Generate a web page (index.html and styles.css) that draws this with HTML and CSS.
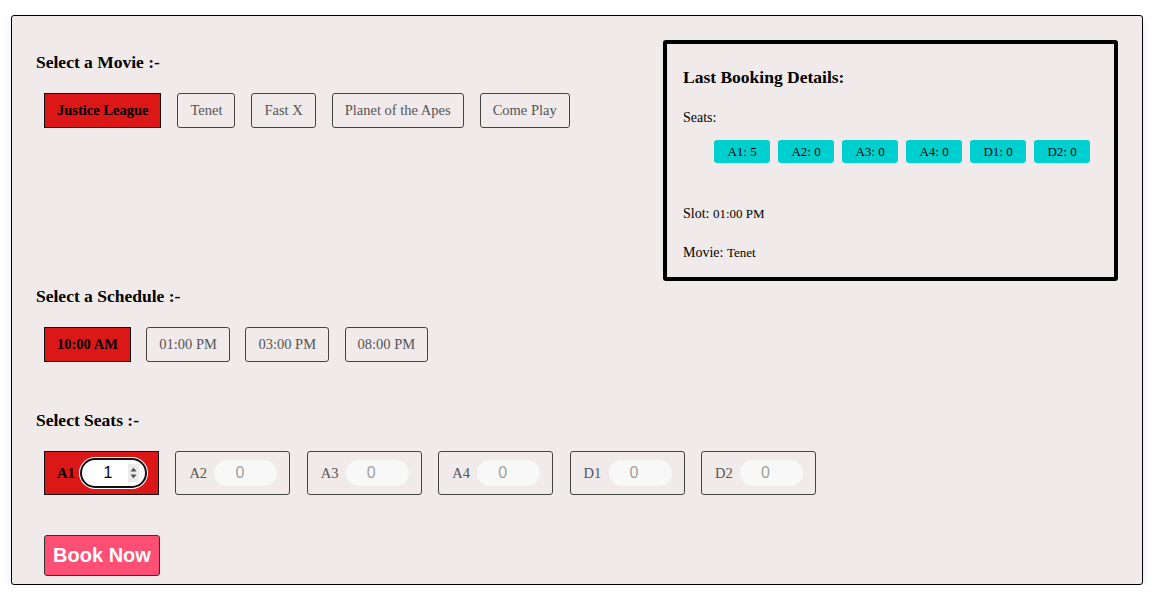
FILE: index.html
```html
<!DOCTYPE html>
<html>
<head>
<meta charset="utf-8">
<link rel="stylesheet" href="styles.css">
</head>
<body>
<div class="app">
  <div class="top">
    <div class="movie-sec">
      <div class="title">Select a Movie :-</div>
      <div class="opts">
        <button class="opt active">Justice League</button>
        <button class="opt">Tenet</button>
        <button class="opt">Fast X</button>
        <button class="opt">Planet of the Apes</button>
        <button class="opt">Come Play</button>
      </div>
    </div>
    <div class="last">
      <div class="last-title">Last Booking Details:</div>
      <div class="lbl">Seats:</div>
      <div class="chips">
        <span class="chip">A1: 5</span>
        <span class="chip">A2: 0</span>
        <span class="chip">A3: 0</span>
        <span class="chip">A4: 0</span>
        <span class="chip">D1: 0</span>
        <span class="chip">D2: 0</span>
      </div>
      <div class="lbl slot">Slot: <span class="val">01:00 PM</span></div>
      <div class="lbl movie">Movie: <span class="val">Tenet</span></div>
    </div>
  </div>

  <div class="title sched-title">Select a Schedule :-</div>
  <div class="opts sched">
    <button class="opt active">10:00 AM</button>
    <button class="opt">01:00 PM</button>
    <button class="opt">03:00 PM</button>
    <button class="opt">08:00 PM</button>
  </div>

  <div class="title seats-title">Select Seats :-</div>
  <div class="seats">
    <div class="seat active">
      <span class="seat-lbl">A1</span>
      <span class="pill focus">
        <input class="num" type="text" value="1">
        <svg class="spin" width="11" height="18" viewBox="0 0 11 18"><rect width="11" height="18" fill="#ececec"/><path d="M2.5 7.5 L5.5 3.5 L8.5 7.5 Z" fill="#555"/><path d="M2.5 10.5 L5.5 14.5 L8.5 10.5 Z" fill="#555"/></svg>
      </span>
    </div>
    <div class="seat"><span class="seat-lbl">A2</span><span class="pill"><input class="num" type="text" value="0" disabled></span></div>
    <div class="seat"><span class="seat-lbl">A3</span><span class="pill"><input class="num" type="text" value="0" disabled></span></div>
    <div class="seat"><span class="seat-lbl">A4</span><span class="pill"><input class="num" type="text" value="0" disabled></span></div>
    <div class="seat"><span class="seat-lbl">D1</span><span class="pill"><input class="num" type="text" value="0" disabled></span></div>
    <div class="seat"><span class="seat-lbl">D2</span><span class="pill"><input class="num" type="text" value="0" disabled></span></div>
  </div>

  <button class="book">Book Now</button>
</div>
</body>
</html>
```

FILE: styles.css
```css
* { box-sizing: border-box; }
html, body { margin: 0; padding: 0; background: #ffffff; }
body { font-family: "Liberation Serif", "Times New Roman", serif; }

.app {
  margin: 15px 0 0 11px;
  width: 1132px;
  height: 570px;
  border: 1px solid #000;
  border-radius: 3px;
  background: #f0eaea;
  padding: 24px 24px 8px 24px;
  box-shadow: 0 5px 10px rgba(120, 150, 210, 0.22);
}

.top {
  display: flex;
  justify-content: space-between;
  align-items: flex-start;
}

.movie-sec { padding-top: 12px; }

.title {
  font-size: 17.5px;
  font-weight: bold;
  line-height: 20px;
  height: 20px;
  color: #000;
}

.opts {
  display: flex;
  gap: 16px;
  margin: 21px 0 0 8px;
}

.opts.sched { gap: 15.5px; }

.opt {
  height: 35px;
  padding: 0 12px;
  font-family: "Liberation Serif", "Times New Roman", serif;
  font-size: 14.5px;
  color: #555;
  background: transparent;
  border: 1px solid #444;
  border-radius: 3px;
}

.opt.active {
  background: #dc1717;
  color: #000;
  font-weight: bold;
  border: 1px solid #111;
  border-radius: 0;
}

.last {
  width: 455px;
  height: 241px;
  border: 4px solid #000;
  border-radius: 3px;
  padding: 23px 16px 0 16px;
}

.last-title {
  font-size: 17.5px;
  font-weight: bold;
  line-height: 20px;
}

.lbl {
  font-size: 14px;
  line-height: 16px;
  margin-top: 23px;
  color: #000;
}

.val { font-size: 13px; }

.chips {
  display: flex;
  gap: 8px;
  margin: 14px 0 0 31px;
}

.chip {
  width: 56px;
  height: 23px;
  background: #00cfcf;
  border-radius: 3px;
  font-size: 13px;
  line-height: 23px;
  text-align: center;
  color: #000;
}

.lbl.slot { margin-top: 43px; }

.sched-title { margin-top: 5px; }

.seats-title { margin-top: 48px; }

.seats {
  display: flex;
  gap: 16.4px;
  margin: 21px 0 0 8px;
}

.seat {
  width: 115px;
  height: 44px;
  border: 1px solid #444;
  border-radius: 3px;
  display: flex;
  align-items: center;
  padding: 0 0 0 13px;
  gap: 7px;
}

.seat-lbl {
  font-size: 14.5px;
  color: #555;
  width: 18px;
}

.seat.active {
  background: #dc1717;
  border: 1px solid #111;
  border-radius: 0;
  padding-left: 12px;
  gap: 5px;
}

.seat.active .seat-lbl {
  color: #000;
  font-weight: bold;
}

.pill {
  display: flex;
  align-items: center;
  width: 63px;
  height: 26px;
  border-radius: 13px;
  background: #f8f8f8;
  overflow: hidden;
}

.num {
  width: 100%;
  height: 100%;
  border: none;
  background: transparent;
  font-family: "Liberation Sans", Arial, sans-serif;
  font-size: 16px;
  color: #a0a0a0;
  text-align: center;
  padding: 0 12px 0 0;
  outline: none;
}

.pill.focus {
  width: 67px;
  height: 30px;
  border-radius: 15px;
  background: #fff;
  border: 2px solid #101010;
  box-shadow: 0 0 0 1px #ffffff;
  padding-right: 6px;
}

.pill.focus .num {
  color: #000;
  padding: 0 0 0 6px;
}

.spin { flex: none; }

.book {
  display: block;
  margin: 40px 0 0 8px;
  width: 116px;
  height: 41px;
  background: #ff4f75;
  border: 1px solid #333;
  border-radius: 3px;
  color: #fff;
  font-family: "Liberation Sans", Arial, sans-serif;
  font-weight: bold;
  font-size: 20px;
  padding: 0;
}
```
